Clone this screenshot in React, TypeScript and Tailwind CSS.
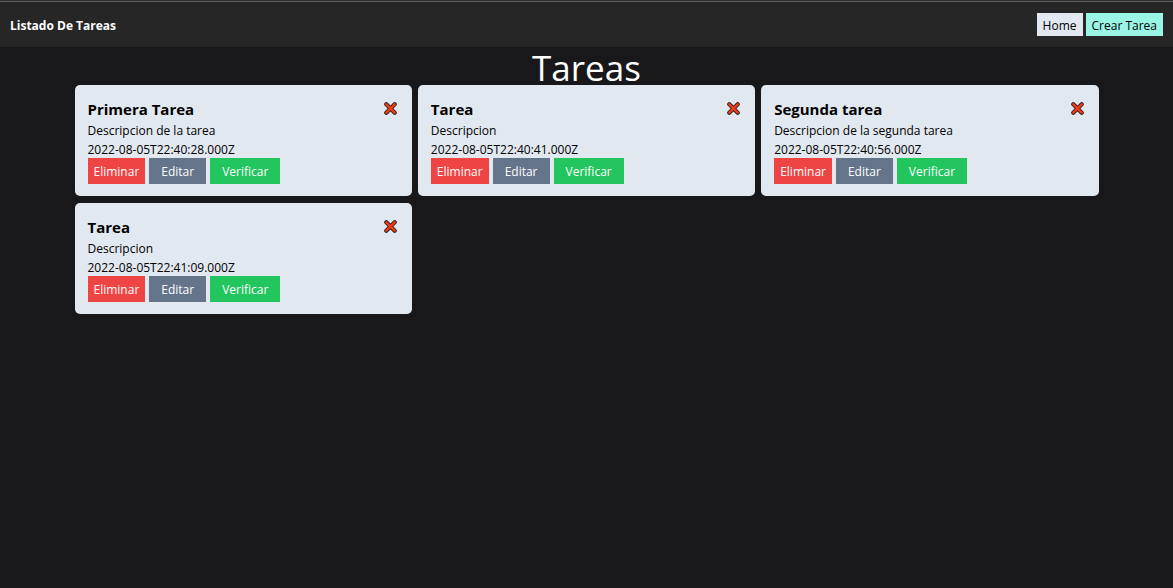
type Task = {
  id: number;
  title: string;
  description: string;
  createdAt: string;
};

const tasks: Task[] = [
  { id: 1, title: "Primera Tarea", description: "Descripcion de la tarea", createdAt: "2022-08-05T22:40:28.000Z" },
  { id: 2, title: "Tarea", description: "Descripcion", createdAt: "2022-08-05T22:40:41.000Z" },
  { id: 3, title: "Segunda tarea", description: "Descripcion de la segunda tarea", createdAt: "2022-08-05T22:40:56.000Z" },
  { id: 4, title: "Tarea", description: "Descripcion", createdAt: "2022-08-05T22:41:09.000Z" },
];

function CrossIcon() {
  return (
    <svg viewBox="0 0 13 13" className="size-[13px]" aria-hidden="true">
      <path d="M2.3 2.3 10.7 10.7M10.7 2.3 2.3 10.7" stroke="#2b2320" strokeWidth="4.2" strokeLinecap="round" />
      <path d="M2.3 2.3 10.7 10.7M10.7 2.3 2.3 10.7" stroke="#f03a17" strokeWidth="2.4" strokeLinecap="round" />
    </svg>
  );
}

function Navbar() {
  return (
    <nav className="flex items-center justify-between border-t border-[#5b5b60] bg-neutral-800 px-[10px] py-[11px]">
      <h1 className="pt-0.5 text-xs leading-[21px] font-bold text-white">Listado De Tareas</h1>
      <ul className="flex gap-[3px] text-xs leading-[21px] text-black">
        <li>
          <a href="#home" className="block bg-slate-200 px-1.5 pt-0.5">Home</a>
        </li>
        <li>
          <a href="#crear" className="block bg-[#99f6e4] px-1.5 pt-0.5">Crear Tarea</a>
        </li>
      </ul>
    </nav>
  );
}

function TaskCard({ task }: { task: Task }) {
  return (
    <article className="rounded-[5px] bg-slate-200 px-[13px] py-3 text-black">
      <header className="flex items-start justify-between">
        <h2 className="text-[15px] leading-6 font-bold">{task.title}</h2>
        <span className="pt-[5px] pr-0.5">
          <CrossIcon />
        </span>
      </header>
      <p className="text-xs leading-5">{task.description}</p>
      <p className="text-xs leading-[17px]">{task.createdAt}</p>
      <div className="flex gap-1 text-xs leading-6 text-white">
        <button type="button" className="bg-[#ef4444] px-1.5 pt-0.5">Eliminar</button>
        <button type="button" className="bg-[#64748b] px-3 pt-0.5">Editar</button>
        <button type="button" className="bg-[#22c55e] px-3 pt-0.5">Verificar</button>
      </div>
    </article>
  );
}

export default function App() {
  return (
    <div className="min-h-screen bg-zinc-900 font-['Open_Sans','Noto_Sans',sans-serif]">
      <div className="h-px bg-[#2e2e31]" />
      <Navbar />
      <main className="mx-auto max-w-[1024px]">
        <h1 className="pt-1 text-center text-[35px] leading-[34px] text-white">Tareas</h1>
        <section className="grid grid-cols-3 gap-x-1.5 gap-y-[7px]">
          {tasks.map((task) => (
            <TaskCard key={task.id} task={task} />
          ))}
        </section>
      </main>
    </div>
  );
}
